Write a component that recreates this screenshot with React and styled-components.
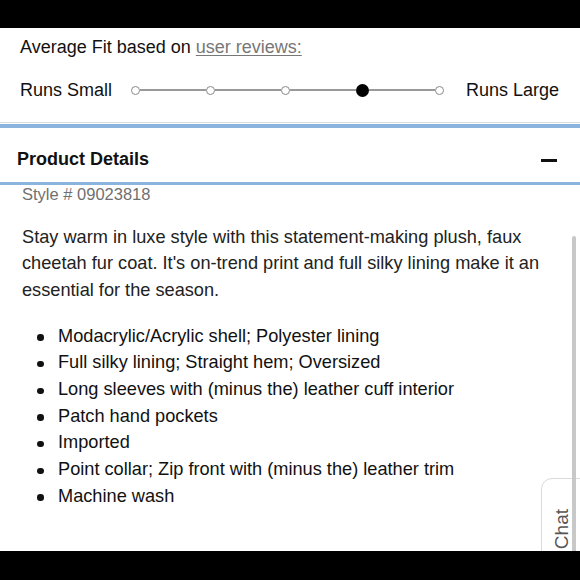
import React from "react";
import styled, { createGlobalStyle } from "styled-components";

const GlobalStyle = createGlobalStyle`
  html, body { margin: 0; padding: 0; background: #fff; }
  body { font-family: "Liberation Sans", Arial, sans-serif; color: #111; }
`;

const Page = styled.div`
  width: 580px;
  height: 580px;
  display: flex;
  flex-direction: column;
  overflow: hidden;
  background: #fff;
`;

const BlackBar = styled.div`
  height: ${(p) => p.$h}px;
  flex: none;
  background: #000;
  position: relative;
  z-index: 2;
`;

const FitSection = styled.section`
  flex: none;
  padding: 8px 21px 21px 20px;
  border-bottom: 1px solid #dcdcdc;
`;

const FitTitle = styled.div`
  font-size: 18px;
  line-height: 22px;
  color: #111;
`;

const ReviewLink = styled.a`
  color: #777;
  text-decoration: underline;
  text-underline-offset: 2px;
  text-decoration-thickness: 1px;
`;

const FitRow = styled.div`
  margin-top: 21px;
  display: flex;
  align-items: center;
  height: 22px;
`;

const FitLabel = styled.span`
  font-size: 18px;
  line-height: 22px;
  color: #111;
  white-space: nowrap;
`;

const Scale = styled.div`
  flex: 1;
  display: flex;
  align-items: center;
  margin: 0 22px 0 19px;
`;

const Dot = styled.span`
  flex: none;
  box-sizing: border-box;
  width: ${(p) => (p.$active ? 13 : 9)}px;
  height: ${(p) => (p.$active ? 13 : 9)}px;
  border-radius: 50%;
  background: ${(p) => (p.$active ? "#000" : "#fff")};
  border: ${(p) => (p.$active ? "none" : "1.5px solid #8a8a8a")};
`;

const Segment = styled.span`
  flex: 1;
  height: 1.5px;
  background: #999;
`;

const Header = styled.div`
  flex: none;
  margin-top: 1px;
  border-top: 4px solid #8ab4dd;
  border-bottom: 3px solid #8ab4dd;
  height: 54px;
  box-sizing: content-box;
  padding: 0 23px 0 17px;
  display: flex;
  justify-content: space-between;
  align-items: flex-start;
`;

const HeaderTitle = styled.h2`
  margin: 20px 0 0;
  font-size: 18px;
  line-height: 22px;
  font-weight: 700;
  color: #111;
`;

const Minus = styled.span`
  margin-top: 31px;
  width: 16px;
  height: 2.5px;
  background: #111;
`;

const Content = styled.div`
  flex: 1;
  position: relative;
  overflow: hidden;
  padding: 0 27px 0 22px;
`;

const StyleNo = styled.div`
  font-size: 16.5px;
  line-height: 19px;
  color: #707070;
`;

const Description = styled.p`
  margin: 20px 0 0;
  font-size: 18.2px;
  line-height: 26.4px;
  color: #222;
`;

const Features = styled.ul`
  list-style: none;
  margin: 19.5px 0 0;
  padding: 0 0 0 15px;
`;

const Feature = styled.li`
  display: flex;
  align-items: flex-start;
  font-size: 18.2px;
  line-height: 26.65px;
  color: #111;
`;

const Bullet = styled.span`
  flex: none;
  width: 6.5px;
  height: 6.5px;
  border-radius: 50%;
  background: #111;
  margin: 11.5px 14.5px 0 0;
`;

const ScrollThumb = styled.div`
  position: absolute;
  top: 51px;
  right: 4px;
  bottom: 0;
  width: 4px;
  border-radius: 2px 2px 0 0;
  background: #c8c8c8;
  z-index: 2;
`;

const ChatTab = styled.button`
  position: absolute;
  left: 541px;
  top: 293px;
  right: -12px;
  bottom: -12px;
  margin: 0;
  padding: 30px 0 0 10px;
  border: 1px solid #dadada;
  border-radius: 11px 0 0 0;
  background: #fff;
  display: flex;
  align-items: flex-start;
  cursor: pointer;
  z-index: 1;
`;

const ChatText = styled.span`
  writing-mode: vertical-rl;
  transform: rotate(180deg);
  font-family: "Liberation Sans", Arial, sans-serif;
  font-size: 19px;
  line-height: 19px;
  color: #555;
`;

const features = [
  "Modacrylic/Acrylic shell; Polyester lining",
  "Full silky lining; Straight hem; Oversized",
  "Long sleeves with (minus the) leather cuff interior",
  "Patch hand pockets",
  "Imported",
  "Point collar; Zip front with (minus the) leather trim",
  "Machine wash",
];

export default function App() {
  const steps = [0, 1, 2, 3, 4];
  const active = 3;
  return (
    <>
      <GlobalStyle />
      <Page>
        <BlackBar $h={28} />
        <FitSection>
          <FitTitle>
            Average Fit based on <ReviewLink href="#">user reviews:</ReviewLink>
          </FitTitle>
          <FitRow>
            <FitLabel>Runs Small</FitLabel>
            <Scale>
              {steps.map((s) => (
                <React.Fragment key={s}>
                  {s > 0 && <Segment />}
                  <Dot $active={s === active} />
                </React.Fragment>
              ))}
            </Scale>
            <FitLabel>Runs Large</FitLabel>
          </FitRow>
        </FitSection>
        <Header>
          <HeaderTitle>Product Details</HeaderTitle>
          <Minus />
        </Header>
        <Content>
          <StyleNo>Style # 09023818</StyleNo>
          <Description>
            Stay warm in luxe style with this statement-making plush, faux
            cheetah fur coat. It's on-trend print and full silky lining make it
            an essential for the season.
          </Description>
          <Features>
            {features.map((f) => (
              <Feature key={f}>
                <Bullet />
                <span>{f}</span>
              </Feature>
            ))}
          </Features>
          <ChatTab>
            <ChatText>Chat</ChatText>
          </ChatTab>
          <ScrollThumb />
        </Content>
        <BlackBar $h={29} />
      </Page>
    </>
  );
}
